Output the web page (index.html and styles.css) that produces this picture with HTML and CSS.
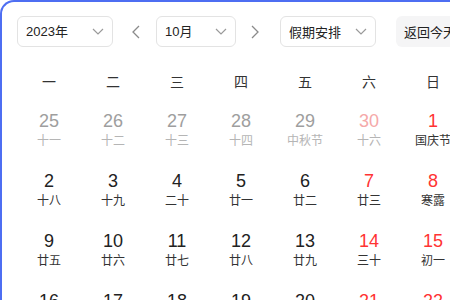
FILE: index.html
```html
<!DOCTYPE html>
<html lang="zh">
<head>
<meta charset="utf-8">
<link rel="stylesheet" href="styles.css">
</head>
<body>
<div class="cal">
  <div class="toolbar">
    <div class="select sel-year"><span>2023年</span><svg class="chev" viewBox="0 0 12 7" width="12" height="7"><path d="M1 1l5 5 5-5" fill="none" stroke="#9a9a9a" stroke-width="1.2"/></svg></div>
    <div class="arrow"><svg viewBox="0 0 8 14" width="8" height="14"><path d="M7 1L1 7l6 6" fill="none" stroke="#8a8a8a" stroke-width="1.3"/></svg></div>
    <div class="select sel-month"><span>10月</span><svg class="chev" viewBox="0 0 12 7" width="12" height="7"><path d="M1 1l5 5 5-5" fill="none" stroke="#9a9a9a" stroke-width="1.2"/></svg></div>
    <div class="arrow arrow-next"><svg viewBox="0 0 8 14" width="8" height="14"><path d="M1 1l6 6-6 6" fill="none" stroke="#8a8a8a" stroke-width="1.3"/></svg></div>
    <div class="select sel-hol"><span>假期安排</span><svg class="chev" viewBox="0 0 12 7" width="12" height="7"><path d="M1 1l5 5 5-5" fill="none" stroke="#9a9a9a" stroke-width="1.2"/></svg></div>
    <div class="today">返回今天</div>
  </div>
  <div class="grid">
    <div class="wd">一</div><div class="wd">二</div><div class="wd">三</div><div class="wd">四</div><div class="wd">五</div><div class="wd">六</div><div class="wd">日</div>

    <div class="day other"><b>25</b><i>十一</i></div>
    <div class="day other"><b>26</b><i>十二</i></div>
    <div class="day other"><b>27</b><i>十三</i></div>
    <div class="day other"><b>28</b><i>十四</i></div>
    <div class="day other"><b>29</b><i>中秋节</i></div>
    <div class="day other red"><b>30</b><i>十六</i></div>
    <div class="day red"><b>1</b><i>国庆节</i></div>

    <div class="day"><b>2</b><i>十八</i></div>
    <div class="day"><b>3</b><i>十九</i></div>
    <div class="day"><b>4</b><i>二十</i></div>
    <div class="day"><b>5</b><i>廿一</i></div>
    <div class="day"><b>6</b><i>廿二</i></div>
    <div class="day red"><b>7</b><i>廿三</i></div>
    <div class="day red"><b>8</b><i>寒露</i></div>

    <div class="day"><b>9</b><i>廿五</i></div>
    <div class="day"><b>10</b><i>廿六</i></div>
    <div class="day"><b>11</b><i>廿七</i></div>
    <div class="day"><b>12</b><i>廿八</i></div>
    <div class="day"><b>13</b><i>廿九</i></div>
    <div class="day red"><b>14</b><i>三十</i></div>
    <div class="day red"><b>15</b><i>初一</i></div>

    <div class="day"><b>16</b><i>初二</i></div>
    <div class="day"><b>17</b><i>初三</i></div>
    <div class="day"><b>18</b><i>初四</i></div>
    <div class="day"><b>19</b><i>初五</i></div>
    <div class="day"><b>20</b><i>初六</i></div>
    <div class="day red"><b>21</b><i>初七</i></div>
    <div class="day red"><b>22</b><i>初八</i></div>
  </div>
</div>
</body>
</html>
```
FILE: styles.css
```css
html, body {
  margin: 0;
  padding: 0;
  background: #fff;
  overflow: hidden;
}
body {
  font-family: "Liberation Sans", Arial, "Noto Sans CJK SC", sans-serif;
  color: #222;
}
.cal {
  width: 500px;
  height: 400px;
  border-top: 2px solid #4e6ef2;
  border-left: 2px solid #4e6ef2;
  border-top-left-radius: 14px;
  padding: 14px 0 0 15px;
  box-sizing: border-box;
}
.toolbar {
  display: flex;
  align-items: center;
  height: 31px;
}
.toolbar > * { flex: none; }
.select {
  box-sizing: border-box;
  height: 31px;
  border: 1px solid #e3e3e3;
  border-radius: 6px;
  display: flex;
  align-items: center;
  justify-content: space-between;
  padding: 0 8px 0 8px;
  font-size: 13px;
  color: #222;
  font-family: "Noto Sans CJK SC", sans-serif;
}
.select span { line-height: 1; }
.sel-year { width: 96px; font-family: "Liberation Sans", "Noto Sans CJK SC", sans-serif; }
.sel-month { width: 80px; margin-left: 10px; font-family: "Liberation Sans", "Noto Sans CJK SC", sans-serif; }
.sel-hol { width: 96px; margin-left: 15px; }
.chev { flex: none; }
.arrow {
  width: 20px;
  height: 31px;
  margin-left: 13px;
  display: flex;
  align-items: center;
  justify-content: center;
}
.arrow-next { margin-left: 9px; }
.today {
  margin-left: 20px;
  height: 31px;
  width: 90px;
  box-sizing: border-box;
  padding-left: 8px;
  background: #f5f5f6;
  border-radius: 6px;
  display: flex;
  align-items: center;
  font-size: 13px;
  color: #222;
  font-family: "Noto Sans CJK SC", sans-serif;
  white-space: nowrap;
}
.grid {
  display: grid;
  grid-template-columns: repeat(7, 64px);
  margin-top: 20px;
}
.wd {
  height: 28px;
  display: flex;
  align-items: center;
  justify-content: center;
  font-size: 14px;
  color: #333;
  font-family: "Noto Sans CJK SC", sans-serif;
}
.day {
  height: 60px;
  box-sizing: border-box;
  padding-top: 16px;
  display: flex;
  flex-direction: column;
  align-items: center;
}
.day b {
  font-weight: normal;
  font-size: 18px;
  line-height: 20px;
  height: 20px;
  color: #222;
}
.day i {
  font-style: normal;
  font-size: 12px;
  line-height: 18px;
  color: #333;
  font-family: "Noto Sans CJK SC", sans-serif;
}
.day.red b { color: #f33; }
.day.other b { color: #9e9e9e; }
.day.other i { color: #b5b5b5; }
.day.other.red b { color: #f5a9a9; }
```
